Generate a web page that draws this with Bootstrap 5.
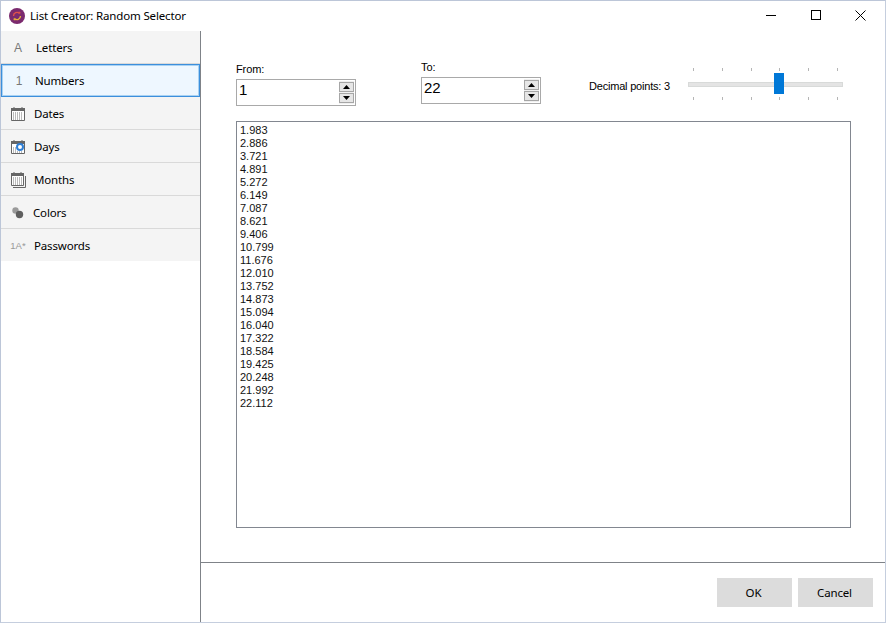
<!DOCTYPE html>
<html lang="en">
<head>
<meta charset="UTF-8">
<title>List Creator: Random Selector</title>
<link href="https://cdn.jsdelivr.net/npm/bootstrap@5.3.0/dist/css/bootstrap.min.css" rel="stylesheet">
<style>
html, body { height: 100%; margin: 0; background: #fff; overflow: hidden; }
.app-window { width: 886px; height: 623px; border: 1px solid #bcc6d8; border-right-color: #c5cede; border-bottom-color: #c5cede; background: #fff; font-family: "Noto Sans", "Open Sans", sans-serif; font-size: 11.5px; letter-spacing: -.16px; color: #000; }
.title-bar { height: 30px; padding-left: 8px; }
.title-text { margin-left: 5px; margin-top: -1px; }
.win-btns { margin-right: 2px; margin-top: -2px; }
.win-btn { width: 45px; height: 28px; }
.side-panel { width: 200px; border-right: 1px solid #7f8388; }
.side-item { height: 33px; background: #f4f4f4; border-bottom: 1px solid #d9d9d9; padding-top: 2px; }
.side-item:last-child { border-bottom: 0; height: 32px; }
.side-item.is-active { background: #eef7ff; border: 1px solid #3c8fdc; box-shadow: inset 0 0 0 1px #a9d2f3; padding-top: 0; }
.side-icon { width: 33px; flex: none; display: flex; justify-content: center; color: #777; padding-left: 1px; }
.side-icon-narrow { width: 32px; }
.side-letter { font-family: "Liberation Sans", sans-serif; font-size: 12px; letter-spacing: 0; color: #777; }
.side-small { font-family: "Liberation Sans", sans-serif; font-size: 9.5px; letter-spacing: 0; color: #999; }
.letters-label { padding-left: 2px; }
.main-panel { min-width: 0; }
.top-row { height: 90px; padding-left: 35px; }
.spin-from { width: 120px; margin-top: 31px; }
.spin-to { width: 120px; margin-top: 29px; margin-left: 65px; }
.field-label { font-family: "Liberation Sans", sans-serif; font-size: 11px; letter-spacing: -.1px; line-height: 14px; height: 17px; }
.spin-box { height: 27px; border: 1px solid #a9a9a9; padding: 0 1px 0 2px; }
.spin-value { font-family: "Liberation Sans", sans-serif; font-size: 15px; letter-spacing: 0; line-height: 24px; margin-top: -6px; }
.spin-btns { width: 15px; gap: 1px; background: #f0f0f0; padding: 1px 0; }
.spin-btn { width: 15px; height: 10px; border: 1px solid #a6a6a6; background: #e6e6e6; }
.decimal-label { font-family: "Liberation Sans", sans-serif; font-size: 11px; letter-spacing: -.2px; margin-left: 48px; margin-top: 48px; width: 99px; line-height: 14px; }
.slider-box { width: 155px; height: 36px; margin-top: 37px; }
.tick-row { height: 3px; padding: 0 5px; }
.tick-row span { width: 1px; height: 3px; background: #b5b5b5; }
.slider-mid { height: 26px; }
.slider-track { position: absolute; left: 0; right: 0; top: 11px; height: 5px; background: #e4e4e4; border: 1px solid #d8dad9; }
.slider-thumb { position: absolute; left: 86px; top: 2px; width: 10px; height: 21px; background: #0078d7; }
.result-list { width: 615px; height: 407px; margin-left: 35px; border: 1px solid #828790; padding: 2px 3px; font-family: "Liberation Sans", sans-serif; font-size: 11px; letter-spacing: 0; line-height: 13px; color: #111; }
.foot-bar { height: 60px; border-top: 1px solid #7f8388; margin-top: 34px; padding: 15px 12px 0 0; gap: 6px; }
.dlg-btn { width: 75px; height: 29px; padding: 0 2px 0 0; border: 0; border-radius: 0; background: #dcdcdc; color: #000; font-size: 11.5px; letter-spacing: -.16px; font-family: "Noto Sans", "Open Sans", sans-serif; }
</style>
</head>
<body>
<div class="app-window d-flex flex-column">
  <div class="title-bar d-flex align-items-center flex-shrink-0">
    <svg width="16" height="16" viewBox="0 0 16 16">
      <circle cx="8" cy="8" r="8" fill="#7b2a6e"/>
      <path d="M4.500 8a3.500 3.500 0 0 1 6-2.500" fill="none" stroke="#e0534a" stroke-width="1.400"/>
      <path d="M11.500 8a3.500 3.500 0 0 1-6 2.500" fill="none" stroke="#e8b23a" stroke-width="1.400"/>
      <path d="M9.500 3.500l2 .5-.5 2.500z" fill="#e0534a"/>
      <path d="M6.500 12.500l-2-.5.5-2.500z" fill="#e8b23a"/>
    </svg>
    <span class="title-text">List Creator: Random Selector</span>
    <div class="win-btns ms-auto d-flex">
      <div class="win-btn d-flex align-items-center justify-content-center">
        <svg width="10" height="10"><path d="M0 5.500h10" stroke="#000"/></svg>
      </div>
      <div class="win-btn d-flex align-items-center justify-content-center">
        <svg width="10" height="10"><rect x=".5" y=".5" width="9" height="9" fill="none" stroke="#000"/></svg>
      </div>
      <div class="win-btn d-flex align-items-center justify-content-center">
        <svg width="11" height="11"><path d="M.5.500l10 10M10.500.500l-10 10" stroke="#000" fill="none"/></svg>
      </div>
    </div>
  </div>
  <div class="d-flex flex-grow-1">
    <div class="side-panel">
      <div class="side-item d-flex align-items-center"><span class="side-icon side-letter">A</span><span class="letters-label">Letters</span></div>
      <div class="side-item is-active d-flex align-items-center"><span class="side-icon side-letter">1</span><span>Numbers</span></div>
      <div class="side-item d-flex align-items-center">
        <span class="side-icon"><svg width="14" height="14" viewBox="0 0 14 14"><path d="M.5 1.500h13v12H.5z" fill="#fff" stroke="#666"/><path d="M0 1h14v3H0z" fill="#666"/><path d="M3 0v2M11 0v2" stroke="#666"/><path d="M2 6h10M2 8h10M2 10h10M2 12h10" stroke="#777" stroke-dasharray="1 1"/></svg></span>
        <span>Dates</span>
      </div>
      <div class="side-item d-flex align-items-center">
        <span class="side-icon"><svg width="14" height="14" viewBox="0 0 14 14"><path d="M.5 1.500h13v12H.5z" fill="#fff" stroke="#666"/><path d="M0 1h14v3H0z" fill="#666"/><path d="M3 0v2M11 0v2" stroke="#666"/><path d="M2 8h3M2 10h3M2 12h10" stroke="#777" stroke-dasharray="1 1"/><circle cx="9" cy="7" r="3" fill="#fff" stroke="#2f7fd6" stroke-width="2"/></svg></span>
        <span>Days</span>
      </div>
      <div class="side-item d-flex align-items-center">
        <span class="side-icon"><svg width="15" height="16" viewBox="0 0 15 16"><path d="M14.500 4v11.500H2" fill="none" stroke="#666"/><path d="M.5 1.500h12v12H.5z" fill="#fff" stroke="#666"/><path d="M0 1h13v3H0z" fill="#666"/><path d="M3 0v2M10 0v2" stroke="#666"/><path d="M2 6h9M2 8h9M2 10h9M2 12h9" stroke="#777" stroke-dasharray="1 1"/></svg></span>
        <span>Months</span>
      </div>
      <div class="side-item d-flex align-items-center">
        <span class="side-icon side-icon-narrow"><svg width="12" height="12" viewBox="0 0 12 12"><circle cx="3.500" cy="3.500" r="3.200" fill="#9a9a9a"/><circle cx="7.500" cy="7.500" r="3.700" fill="#5f5f5f"/></svg></span>
        <span>Colors</span>
      </div>
      <div class="side-item d-flex align-items-center"><span class="side-icon side-small">1A*</span><span>Passwords</span></div>
    </div>
    <div class="main-panel flex-grow-1 d-flex flex-column">
      <div class="top-row d-flex align-items-start">
        <div class="spin-from">
          <div class="field-label">From:</div>
          <div class="spin-box d-flex align-items-center justify-content-between">
            <span class="spin-value">1</span>
            <div class="spin-btns d-flex flex-column">
              <div class="spin-btn d-flex align-items-center justify-content-center"><svg width="7" height="4"><path d="M3.500 0L7 4H0z" fill="#000"/></svg></div>
              <div class="spin-btn d-flex align-items-center justify-content-center"><svg width="7" height="4"><path d="M0 0h7L3.500 4z" fill="#000"/></svg></div>
            </div>
          </div>
        </div>
        <div class="spin-to">
          <div class="field-label">To:</div>
          <div class="spin-box d-flex align-items-center justify-content-between">
            <span class="spin-value">22</span>
            <div class="spin-btns d-flex flex-column">
              <div class="spin-btn d-flex align-items-center justify-content-center"><svg width="7" height="4"><path d="M3.500 0L7 4H0z" fill="#000"/></svg></div>
              <div class="spin-btn d-flex align-items-center justify-content-center"><svg width="7" height="4"><path d="M0 0h7L3.500 4z" fill="#000"/></svg></div>
            </div>
          </div>
        </div>
        <div class="decimal-label">Decimal points: 3</div>
        <div class="slider-box">
          <div class="tick-row d-flex justify-content-between"><span></span><span></span><span></span><span></span><span></span><span></span></div>
          <div class="slider-mid position-relative">
            <div class="slider-track"></div>
            <div class="slider-thumb"></div>
          </div>
          <div class="tick-row d-flex justify-content-between"><span></span><span></span><span></span><span></span><span></span><span></span></div>
        </div>
      </div>
      <div class="result-list" id="resultList"></div>
      <div class="foot-bar d-flex justify-content-end">
        <button type="button" class="btn dlg-btn">OK</button>
        <button type="button" class="btn dlg-btn">Cancel</button>
      </div>
    </div>
  </div>
</div>
<script>
  var values = ["1.983","2.886","3.721","4.891","5.272","6.149","7.087","8.621","9.406","10.799","11.676","12.010","13.752","14.873","15.094","16.040","17.322","18.584","19.425","20.248","21.992","22.112"];
  document.getElementById("resultList").innerHTML = values.map(function (v) { return "<div>" + v + "</div>"; }).join("");
</script>
<script src="https://cdn.jsdelivr.net/npm/bootstrap@5.3.0/dist/js/bootstrap.bundle.min.js"></script>
</body>
</html>
